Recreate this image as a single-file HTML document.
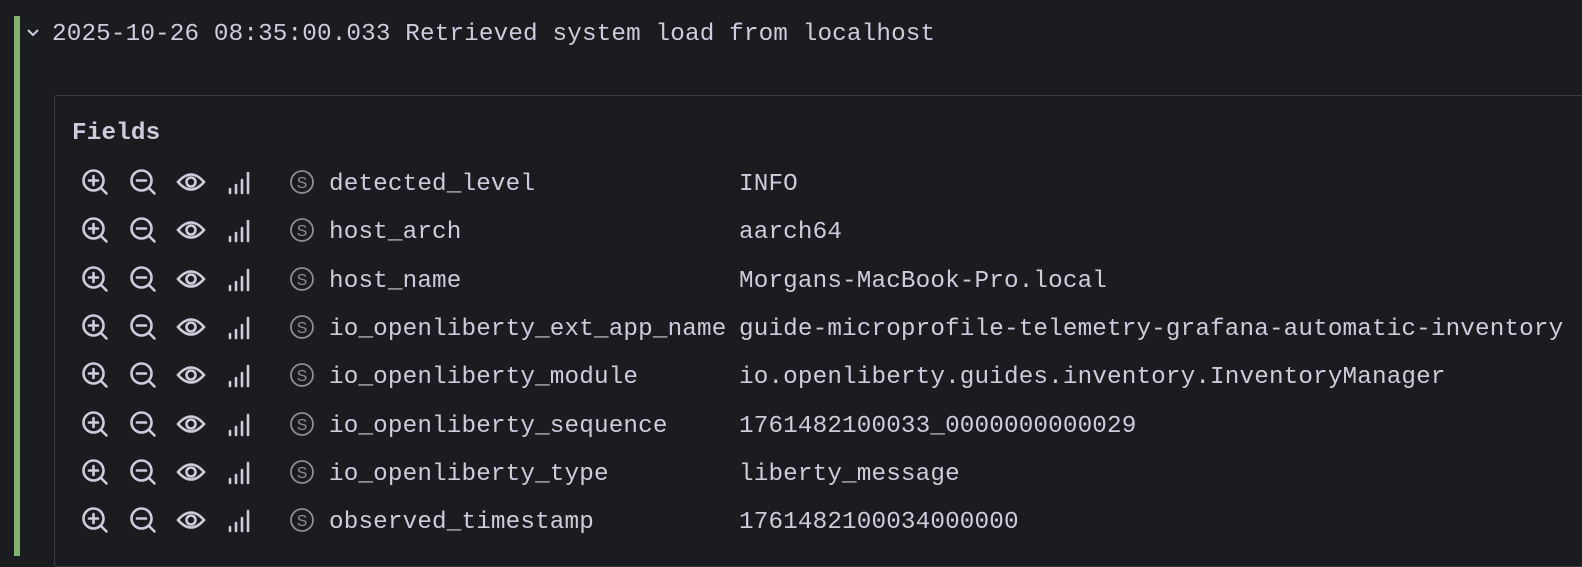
<!DOCTYPE html>
<html><head><style>
body{margin:0;width:1582px;height:548px;background:#1b1c20;overflow:hidden;font-family:"Liberation Mono",monospace;color:#ccccdc;font-size:24.3px;letter-spacing:0.14px;position:relative}
.bar{position:absolute;left:14px;top:16px;width:6px;height:540px;background:#80b36e}
.hdr{position:absolute;left:52px;top:20px;line-height:30px;white-space:pre}
.chev{position:absolute;left:26px;top:26px}
.box{position:absolute;left:54px;top:95px;width:1540px;height:470px;border:1px solid #3a3b40;border-radius:3px}
.fl{position:absolute;left:72px;top:119px;font-weight:bold;line-height:30px}
.row{position:absolute;left:0;height:40px;width:1582px}
.row svg{position:absolute;top:-13px}
.k{position:absolute;left:329px;top:-11px;line-height:30px;white-space:pre}
.v{position:absolute;left:739px;top:-11px;line-height:30px;white-space:pre}
</style></head><body>
<div class="bar"></div>
<svg class="chev" width="14" height="14" viewBox="0 0 14 14"><path d="M2 4 L7 9 L12 4" fill="none" stroke="#ccccdc" stroke-width="2"/></svg>
<div class="hdr">2025-10-26 08:35:00.033 Retrieved system load from localhost</div>
<div class="box"></div>
<div class="fl">Fields</div>
<div id="rows"></div>
<script>
var d=[["detected_level","INFO"],["host_arch","aarch64"],["host_name","Morgans-MacBook-Pro.local"],["io_openliberty_ext_app_name","guide-microprofile-telemetry-grafana-automatic-inventory"],["io_openliberty_module","io.openliberty.guides.inventory.InventoryManager"],["io_openliberty_sequence","1761482100033_0000000000029"],["io_openliberty_type","liberty_message"],["observed_timestamp","1761482100034000000"]];
var s="";
d.forEach(function(r,i){var y=181+i*48.3;
s+='<div class="row" style="top:'+y+'px">'+
'<svg style="left:81px" width="28" height="28" viewBox="0 0 28 28"><circle cx="12.5" cy="12.5" r="10" fill="none" stroke="#ccccdc" stroke-width="2.6"/><path d="M20 20 L25.5 25.5 M8 12.5 H17 M12.5 8 V17" stroke="#ccccdc" stroke-width="2.6" stroke-linecap="round"/></svg>'+
'<svg style="left:129px" width="28" height="28" viewBox="0 0 28 28"><circle cx="12.5" cy="12.5" r="10" fill="none" stroke="#ccccdc" stroke-width="2.6"/><path d="M20 20 L25.5 25.5 M8 12.5 H17" stroke="#ccccdc" stroke-width="2.6" stroke-linecap="round"/></svg>'+
'<svg style="left:176px" width="30" height="28" viewBox="0 0 30 28"><path d="M2 14 Q15 -1 28 14 Q15 29 2 14 Z" fill="none" stroke="#ccccdc" stroke-width="2.6"/><circle cx="15" cy="14" r="4.5" fill="none" stroke="#ccccdc" stroke-width="2.6"/></svg>'+
'<svg style="left:227px" width="24" height="28" viewBox="0 0 24 28"><path d="M3 25 V21 M9 25 V17 M15 25 V12 M21 25 V5" stroke="#ccccdc" stroke-width="2.6" stroke-linecap="round"/></svg>'+
'<svg style="left:289px" width="26" height="28" viewBox="0 0 26 28"><circle cx="13" cy="14" r="11" fill="none" stroke="#8e8e95" stroke-width="1.8"/><text x="13" y="20" text-anchor="middle" font-family="Liberation Sans,sans-serif" font-size="16" fill="#8e8e95">S</text></svg>'+
'<div class="k">'+r[0]+'</div><div class="v">'+r[1]+'</div></div>';});
document.getElementById("rows").innerHTML=s;
</script>
</body></html>
